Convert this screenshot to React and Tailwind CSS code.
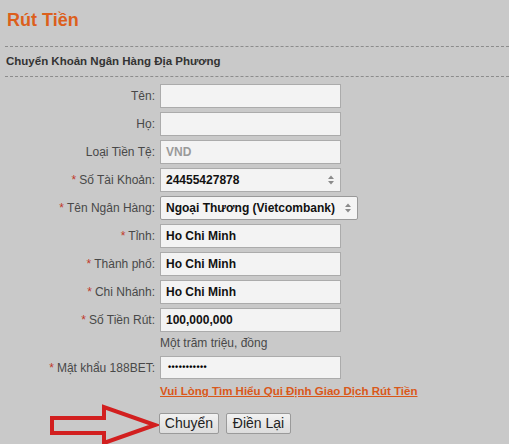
import React from 'react'

const rows = [
  { label: 'Tên', value: '' },
  { label: 'Họ', value: '' },
  { label: 'Loại Tiền Tệ', value: 'VND', muted: true },
  { label: 'Số Tài Khoản', value: '24455427878', req: true, spin: true },
  { label: 'Tên Ngân Hàng', value: 'Ngoại Thương (Vietcombank)', req: true, spin: true, wide: true },
  { label: 'Tỉnh', value: 'Ho Chi Minh', req: true },
  { label: 'Thành phố', value: 'Ho Chi Minh', req: true },
  { label: 'Chi Nhánh', value: 'Ho Chi Minh', req: true },
  { label: 'Số Tiền Rút', value: '100,000,000', req: true },
]

function Spinner() {
  return (
    <svg width="8" height="12" viewBox="0 0 8 12" className="ml-auto mr-[5px]">
      <path d="M1 5 L4 1.5 L7 5 Z" fill="#8a8a8a" />
      <path d="M1 7 L4 10.5 L7 7 Z" fill="#8a8a8a" />
    </svg>
  )
}

function Label({ text, req }) {
  return (
    <div className="w-[156px] shrink-0 text-right text-[12px] text-[#484848] pr-[1px]">
      {req && <span className="text-[#c0392b] mr-[3px]">*</span>}
      {text}:
    </div>
  )
}

function Field({ row }) {
  return (
    <div className="flex items-center h-[24px] mb-[4px]">
      <Label text={row.label} req={row.req} />
      <div
        className={
          (row.wide ? 'w-[198px] bg-[#f4f4f4] border-[#999] rounded-[2px]' : 'w-[181px] bg-[#f3f3f3] border-[#ababab]') +
          ' ml-[4px] h-[24px] border flex items-center pl-[5px] text-[12px] font-bold ' +
          (row.muted ? 'text-[#9a9a9a]' : 'text-[#111]')
        }
      >
        <span>{row.value}</span>
        {row.spin && <Spinner />}
      </div>
    </div>
  )
}

export default function App() {
  return (
    <div className="w-[509px] h-[444px] overflow-hidden bg-[#c9c9c9] font-['Liberation_Sans',Arial,sans-serif]">
      <div className="pl-[7px] pt-[8px] h-[46px] text-[18px] leading-[24px] font-bold text-[#dc5f1c]">
        Rút Tiền
      </div>
      <div className="ml-[5px] border-t border-dashed border-[#8c8c8c] h-[31px] flex items-center pl-[1px] text-[11.5px] font-bold text-[#333] border-b">
        Chuyển Khoản Ngân Hàng Địa Phương
      </div>

      <div className="pt-[7px]">
        {rows.map((r) => (
          <Field key={r.label} row={r} />
        ))}

        <div className="pl-[160px] -mt-[3px] h-[20px] flex items-center text-[12px] text-[#484848]">
          Một trăm triệu, đồng
        </div>

        <div className="flex items-center h-[23px] mt-[3px]">
          <Label text="Mật khẩu 188BET" req />
          <div className="w-[181px] ml-[4px] h-[23px] border border-[#ababab] bg-[#f3f3f3] flex items-center pl-[7px] text-[9px] font-bold text-[#000] tracking-[0.4px]">
            •••••••••••
          </div>
        </div>

        <div className="pl-[160px] h-[26px] flex items-center">
          <a className="text-[11.5px] font-bold text-[#d9581a] underline">
            Vui Lòng Tìm Hiểu Qui Định Giao Dịch Rút Tiền
          </a>
        </div>

        <div className="flex items-center mt-[-1px]">
          <div className="w-[159px] shrink-0 flex justify-end">
            <svg width="110" height="42" viewBox="0 0 110 42">
              <path
                d="M3 14 L55 14 L55 3 L106 21 L55 39 L55 29 L3 29 Z"
                fill="none"
                stroke="#d21f1f"
                strokeWidth="4"
                strokeLinejoin="miter"
              />
            </svg>
          </div>
          <button className="w-[60px] h-[21px] -mt-[4px] border border-[#9a9a9a] rounded-[2px] bg-gradient-to-b from-[#f2f2f2] to-[#dcdcdc] text-[14px] text-[#222] leading-none">
            Chuyển
          </button>
          <button className="ml-[7px] -mt-[4px] w-[65px] h-[21px] border border-[#9a9a9a] rounded-[2px] bg-gradient-to-b from-[#f2f2f2] to-[#dcdcdc] text-[14px] text-[#222] leading-none">
            Điền Lại
          </button>
        </div>
      </div>
    </div>
  )
}
